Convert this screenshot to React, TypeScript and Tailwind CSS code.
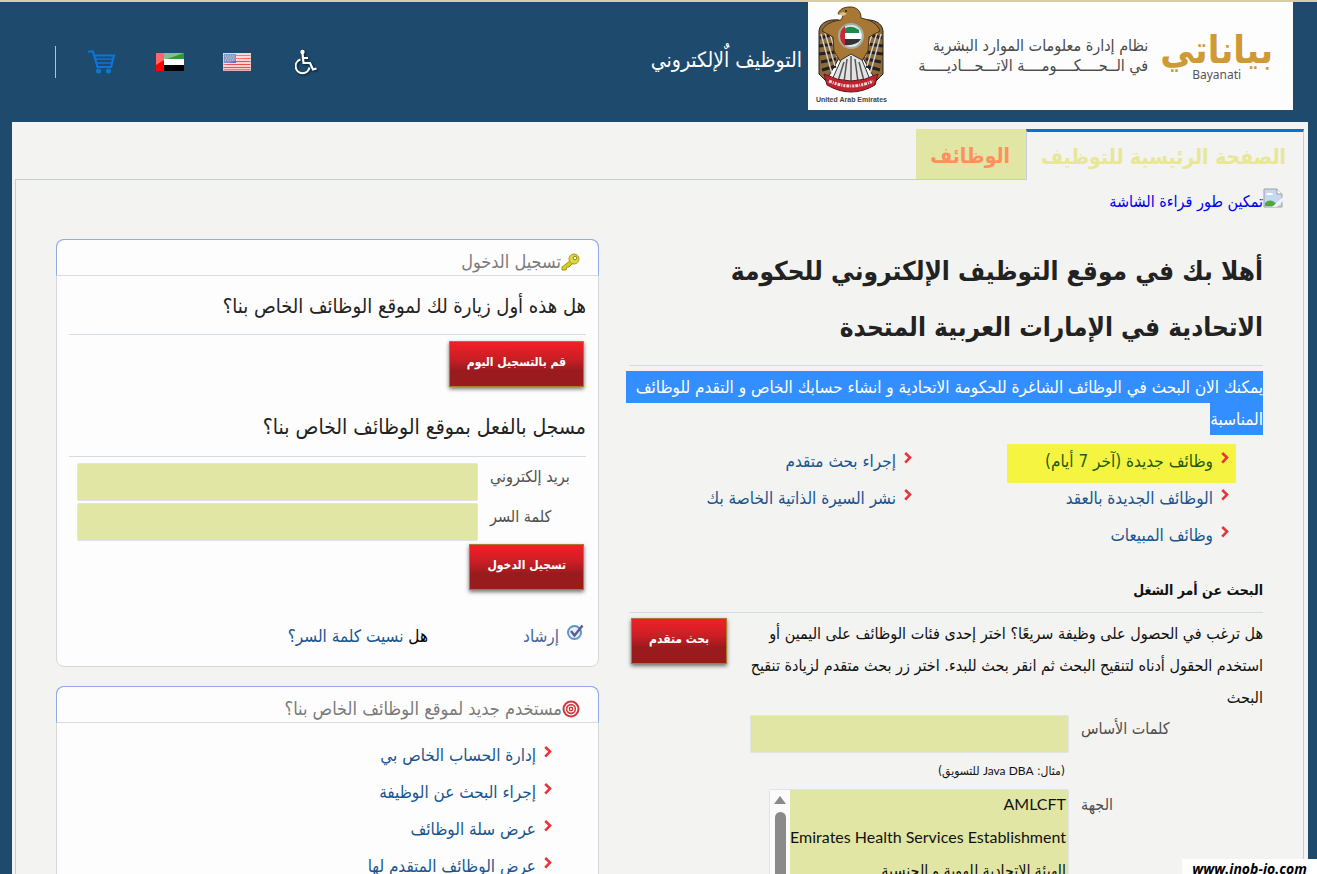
import React, { useState } from "react";

type LinkItem = { label: string; highlighted?: boolean };

const searchLinks: LinkItem[] = [
  { label: "وظائف جديدة (آخر 7 أيام)", highlighted: true },
  { label: "إجراء بحث متقدم" },
  { label: "الوظائف الجديدة بالعقد" },
  { label: "نشر السيرة الذاتية الخاصة بك" },
  { label: "وظائف المبيعات" },
];

const accountLinks: LinkItem[] = [
  { label: "إدارة الحساب الخاص بي" },
  { label: "إجراء البحث عن الوظيفة" },
  { label: "عرض سلة الوظائف" },
  { label: "عرض الوظائف المتقدم لها" },
];

const entities = [
  "AMLCFT",
  "Emirates Health Services Establishment",
  "الهيئة الاتحادية للهوية و الجنسية",
  "وزارة الصحة ووقاية المجتمع",
];

const Chevron = () => (
  <svg width="8" height="12" viewBox="0 0 8 12" className="shrink-0" aria-hidden="true">
    <path d="M1.2 1 L6 5.6 L1.2 10.6" fill="none" stroke="#ea3339" strokeWidth="2.6" />
  </svg>
);

const Emblem = () => (
  <svg width="68" height="88" viewBox="0 0 68 88" aria-hidden="true">
    {/* wings */}
    <path d="M22 14 C12 13 3 16 2 25 L2 68 L9 75 L22 52 Z" fill="#8d6a3c" stroke="#222" strokeWidth="1" />
    <path d="M46 14 C56 13 65 16 66 25 L66 68 L59 75 L46 52 Z" fill="#8d6a3c" stroke="#222" strokeWidth="1" />
    <path d="M3 32 L18 28 M2 40 L17 38 M2 48 L18 46 M4 56 L19 53 M5 64 L19 60 M65 32 L50 28 M66 40 L51 38 M66 48 L50 46 M64 56 L49 53 M63 64 L49 60" stroke="#222" strokeWidth="3" />
    <path d="M4 28 L15 68 M8 27 L18 60 M13 28 L20 51 M64 28 L53 68 M60 27 L50 60 M55 28 L48 51" stroke="#d8d4ce" strokeWidth="1.4" />
    {/* body */}
    <path d="M24 14 C25 12 26 11 26 8 L21 8 C22 4 26 1 33 1 C40 1 44 5 44 12 C53 14 60 17 63 25 L52 31 L51 45 L43 58 L25 58 L17 45 L16 31 L5 25 C8 17 17 15 24 14 Z" fill="#a77835" stroke="#4b3010" strokeWidth="1" />
    <path d="M21 8 L26 6 L30 8 L26 10 Z" fill="#d9c18e" />
    <circle cx="29" cy="5" r="1" fill="#222" />
    <circle cx="34" cy="30" r="12" fill="#e5e5e5" stroke="#9fb0a8" strokeWidth="2" />
    <path d="M27 23 Q34 18 42 24 V27 H27Z" fill="#1b8b4c" />
    <rect x="27" y="27" width="17" height="6" fill="#fff" />
    <path d="M27 33 H44 Q40 40 27 39Z" fill="#333" />
    <path d="M28 20 Q23 24 23 30 Q23 36 28 40Z" fill="#c82a35" />
    {/* tail and ribbon */}
    <path d="M24 54 L34 48 L45 54 L54 76 L34 80 L14 76Z" fill="#e3e3e3" stroke="#333" />
    <path d="M34 50 V77 M30 53 L27 76 M38 53 L41 76 M27 56 L21 75 M42 56 L47 75" stroke="#555" strokeWidth="1.5" />
    <path d="M7 68 Q34 82 61 68 L58 79 Q46 86 34 86 Q22 86 10 79Z" fill="#bd2430" stroke="#691018" />
    <path d="M12 75 Q34 85 56 75" fill="none" stroke="#f0d8d8" strokeWidth="3" strokeDasharray="3 1 1 1 2 1" />
  </svg>
);

const Wheelchair = () => (
  <svg width="24" height="28" viewBox="0 0 24 28" aria-hidden="true" className="drop-shadow-[1px_1px_1px_#071c2c]">
    <circle cx="7.5" cy="4" r="2.2" fill="#fff" />
    <path d="M7.5 5 L8.5 15 H15 L18 21.5 L21.5 20.5 M8.5 10 H13" fill="none" stroke="#fff" strokeWidth="2.2" />
    <path d="M5.5 11.5 A7 7 0 1 0 14.5 19.5" fill="none" stroke="#fff" strokeWidth="2" />
  </svg>
);

const UsFlag = () => (
  <svg width="28" height="18" viewBox="0 0 28 18" aria-hidden="true">
    <rect width="28" height="18" fill="#fff" />
    <path d="M0 2.5 H28 M0 5.5 H28 M0 8.5 H28 M0 11.5 H28 M0 14.5 H28 M0 17 H28" stroke="#ee4d4d" strokeWidth="1.7" />
    <rect x="1" y="1" width="12" height="9" fill="#5e70b0" />
    <path d="M2 3 H12 M3 5 H12 M2 7 H12" stroke="#dfe4f4" strokeDasharray="1 1.4" />
    <path d="M0 0 H28 V5 Q12 6 0 13Z" fill="#fff" opacity=".25" />
    <rect x=".5" y=".5" width="27" height="17" fill="none" stroke="#d9c9cd" opacity=".7" />
  </svg>
);

const UaeFlag = () => (
  <svg width="28" height="18" viewBox="0 0 28 18" aria-hidden="true">
    <rect width="28" height="6" fill="#2e9a35" />
    <rect y="6" width="28" height="6" fill="#fff" />
    <rect y="12" width="28" height="6" fill="#000" />
    <rect width="8" height="18" fill="#f00" />
    <path d="M0 0 H28 L8 7 L0 12Z" fill="#fff" opacity=".4" />
  </svg>
);

const Cart = () => (
  <svg width="28" height="24" viewBox="0 0 28 24" aria-hidden="true">
    <path d="M0 1.5 H5 L9.5 17 H23 L26 5.5 H7" fill="none" stroke="#0b76d6" strokeWidth="2.2" />
    <path d="M7.5 9 H24 M8.5 13 H23" fill="none" stroke="#0b76d6" strokeWidth="1.6" />
    <circle cx="10.5" cy="21" r="2.6" fill="#0b76d6" />
    <circle cx="20.5" cy="21" r="2.6" fill="#0b76d6" />
  </svg>
);

const BrokenImage = () => (
  <svg width="20" height="20" viewBox="0 0 20 20" aria-hidden="true">
    <path d="M1 1 H14 L19 6 V19 H1Z" fill="#c5d9f4" stroke="#a0a0a0" />
    <path d="M3 7 Q4 4 7 5 Q10 5 10 7Z" fill="#fff" />
    <path d="M2 18 V15 Q8 9 15 18Z" fill="#4fa83a" />
    <path d="M14 1 V6 H19" fill="#fff" stroke="#a0a0a0" />
    <path d="M9 19 L20 9 V13 L14 19Z" fill="#f3f3f1" />
  </svg>
);

const Key = () => (
  <svg width="19" height="18" viewBox="0 0 19 18" aria-hidden="true">
    <path d="M9 8 L1 14 L1 17 H5 L6 14 L8 14 L12 10Z" fill="#d8cc28" stroke="#9c9318" />
    <circle cx="13" cy="6" r="5" fill="#e2d73b" stroke="#a49b1e" />
    <circle cx="14" cy="5" r="1.8" fill="#fffde0" stroke="#8f871d" />
  </svg>
);

const Target = () => (
  <svg width="18" height="18" viewBox="0 0 18 18" aria-hidden="true">
    <circle cx="9" cy="9" r="8.5" fill="#cf3a3f" />
    <circle cx="9" cy="9" r="5.8" fill="none" stroke="#fff" strokeWidth="1.3" />
    <circle cx="9" cy="9" r="3" fill="none" stroke="#fff" strokeWidth="1.2" />
    <circle cx="9" cy="9" r="1" fill="#fff" />
  </svg>
);

const HintCheck = () => (
  <svg width="17" height="17" viewBox="0 0 17 17" aria-hidden="true">
    <circle cx="7.5" cy="8.5" r="6.5" fill="#e8f2fb" stroke="#5a97d2" strokeWidth="2" />
    <path d="M4 7 L7.5 11.5 L15.5 1.5" fill="none" stroke="#5c5b92" strokeWidth="2.4" />
  </svg>
);

const RedButton: React.FC<{ children: React.ReactNode; onClick?: () => void }> = ({ children, onClick }) => (
  <button
    type="button"
    onClick={onClick}
    className="h-[46px] shrink-0 whitespace-nowrap border border-[#a97c2c] bg-linear-to-b from-[#ee1f27] from-5% via-[#c81e25] via-40% to-[#991b1e] to-65% px-[17px] pb-1 text-[12px] font-bold text-white shadow-[0_2px_4px_rgba(0,0,0,0.55)]"
  >
    {children}
  </button>
);

const BulletLink: React.FC<{ item: LinkItem }> = ({ item }) => (
  <a href="#" className="flex items-start gap-2 text-[17px] leading-[34px] whitespace-nowrap">
    <span className="pt-2">
      <Chevron />
    </span>
    {item.label}
  </a>
);

const Card: React.FC<{ icon: React.ReactNode; title: string; children: React.ReactNode }> = ({
  icon,
  title,
  children,
}) => (
  <section className="rounded-lg border border-[#d5d7d9] bg-[#fdfdfd]">
    <h2 className="-mx-px -mt-px flex h-[37px] items-center rounded-t-lg border border-[#93a9e8] border-b-[#d9dde0] ps-[18px] pt-2 text-[18px] text-[#7b7b7b]">
      {icon}
      {title}
    </h2>
    {children}
  </section>
);

const App: React.FC = () => {
  const [email, setEmail] = useState("");
  const [password, setPassword] = useState("");
  const [keywords, setKeywords] = useState("");

  return (
    <div
      dir="rtl"
      className="flex h-screen flex-col overflow-hidden border-t-2 border-[#d8cda2] bg-[#1e4a6d] font-['DejaVu_Sans_Condensed','DejaVu_Sans',sans-serif] text-[#111]"
    >
      <header className="flex h-[120px] shrink-0 items-start ps-6 pe-[55px]">
        <div className="flex h-[108px] w-[485px] items-center justify-between bg-[#fdfdfd] ps-5 pe-2">
          <div className="flex items-center gap-3">
            <div className="flex flex-col items-center">
              <span className="text-[38px] leading-[38px] font-bold text-[#cf9a35]">بياناتي</span>
              <span className="font-['Noto_Sans',sans-serif] text-[12px] leading-3 text-[#555]">Bayanati</span>
            </div>
            <p className="text-[16px] leading-5 whitespace-nowrap text-[#4a4a4a]">
              نظام إدارة معلومات الموارد البشرية
              <br />
              في الــحــــكــــومــــة الاتـــحـــاديـــــة
            </p>
          </div>
          <div className="flex flex-col items-center">
            <Emblem />
            <span className="font-['Liberation_Sans',sans-serif] text-[7px] leading-3 font-bold text-[#444]">
              United Arab Emirates
            </span>
          </div>
        </div>
        <h1 className="ms-[6px] pt-[42px] text-[21px] leading-8 whitespace-nowrap text-white">التوظيف اٌلإلكتروني</h1>
        <nav className="ms-auto flex h-[120px] items-center">
          <a href="#" aria-label="إمكانية الوصول" className="me-11">
            <Wheelchair />
          </a>
          <a href="#" aria-label="English" className="me-[39px]">
            <UsFlag />
          </a>
          <a href="#" aria-label="العربية" className="me-10">
            <UaeFlag />
          </a>
          <a href="#" aria-label="سلة الوظائف" className="me-8">
            <Cart />
          </a>
          <span className="h-8 w-px bg-[#a9c6de]" />
        </nav>
      </header>

      <main className="ms-[9px] me-3 flex-1 bg-[#f3f3f1] ps-1 pe-[3px] pt-[7px]">
        <nav className="flex h-[51px] text-[21px] leading-[50px] font-bold whitespace-nowrap">
          <a
            href="#"
            className="border-x border-t-3 border-x-[#c3ced8] border-t-[#0572ce] ps-[17px] pe-[14px] text-[#e8e794]"
          >
            الصفحة الرئيسية للتوظيف
          </a>
          <a href="#" className="border-b border-[#c3ced8] bg-[#e1e6a5] ps-4 pe-[14px] pt-[2px] text-[#ff8f5c]">
            الوظائف
          </a>
          <span className="flex-1 border-b border-[#c3ced8]" />
        </nav>

        <div className="border-x border-[#c3ced8] ps-10 pe-10">
          <a href="#" className="-ms-5 flex h-[59px] items-start pt-2 text-[16px] leading-7 text-[#0000ee]">
            <BrokenImage />
            تمكين طور قراءة الشاشة
          </a>

          <div className="grid grid-cols-[637fr_543fr] items-start gap-[27px]">
            <section>
              <h2 className="me-[3px] border-b border-[#d3dce5] pt-1 pb-[10px] text-[26px] leading-[56px] font-bold whitespace-nowrap text-[#222]">
                أهلا بك في موقع التوظيف الإلكتروني للحكومة
                <br />
                الاتحادية في الإمارات العربية المتحدة
              </h2>
              <p className="mt-[5px] text-[17px] leading-8 whitespace-nowrap text-white">
                <span className="block w-full bg-[#338fff]">
                  يمكنك الان البحث في الوظائف الشاغرة للحكومة الاتحادية و انشاء حسابك الخاص و التقدم للوظائف
                </span>
                <span className="block w-fit bg-[#338fff]">المناسبة</span>
              </p>

              <ul className="mt-[9px] grid auto-rows-[37px] grid-cols-[317px_1fr] ps-[27px] text-[#195590]">
                {searchLinks.map((item) => (
                  <li
                    key={item.label}
                    className={
                      item.highlighted ? "h-[39px] w-[229px] bg-[#f5f541] ps-[7px] text-[#245a12]" : "ps-[7px]"
                    }
                  >
                    <BulletLink item={item} />
                  </li>
                ))}
              </ul>

              <h3 className="me-[3px] mt-[23px] border-b border-[#d3dce5] pb-[10px] text-[14px] leading-6 font-bold">
                البحث عن أمر الشغل
              </h3>
              <div className="mt-[5px] flex items-start justify-between pe-[5px]">
                <p className="text-[16px] leading-8 whitespace-nowrap">
                  هل ترغب في الحصول على وظيفة سريعًا؟ اختر إحدى فئات الوظائف على اليمين أو
                  <br />
                  استخدم الحقول أدناه لتنقيح البحث ثم انقر بحث للبدء. اختر زر بحث متقدم لزيادة تنقيح
                  <br />
                  البحث
                </p>
                <RedButton>بحث متقدم</RedButton>
              </div>

              <div className="flex gap-3 pt-px ps-[91px] text-[16px] text-[#505050]">
                <label htmlFor="keywords" className="w-[91px] text-left leading-7 whitespace-nowrap">
                  كلمات الأساس
                </label>
                <input
                  id="keywords"
                  value={keywords}
                  onChange={(e) => setKeywords(e.target.value)}
                  className="h-[38px] w-[319px] rounded-xs border border-[#dfe4e7] bg-[#e1e6a5] px-1"
                />
              </div>
              <p className="ps-[198px] text-[12px] leading-[35px]">
                (مثال: <span className="font-['Lato',sans-serif]">Java DBA</span> للتسويق)
              </p>
              <div className="flex gap-3 ps-[91px] text-[16px] text-[#505050]">
                <label htmlFor="entity" className="w-[91px] text-left leading-8">
                  الجهة
                </label>
                <div className="flex w-[300px] rounded-xs border border-[#dfe4e7]">
                  <select
                    id="entity"
                    multiple
                    size={4}
                    className="h-[136px] min-w-0 flex-1 overflow-hidden bg-[#e1e6a5] pt-1 font-['Lato','DejaVu_Sans_Condensed','DejaVu_Sans',sans-serif] text-[16px] leading-[33px] text-[#111]"
                  >
                    {entities.map((entity) => (
                      <option key={entity} className="h-[33px] px-[2px] py-0">
                        {entity}
                      </option>
                    ))}
                  </select>
                  <div className="flex w-5 flex-col items-center gap-2 bg-[#fbfbfb] pt-[6px]">
                    <svg width="12" height="8" viewBox="0 0 12 8" aria-hidden="true">
                      <path d="M6 0 L12 8 H0Z" fill="#8a8a8a" />
                    </svg>
                    <span className="w-[11px] flex-1 rounded-t-full bg-[#8a8a8a]" />
                  </div>
                </div>
              </div>
            </section>

            <aside className="flex flex-col gap-[19px]">
              <Card icon={<Key />} title="تسجيل الدخول">
                <div className="px-3">
                  <h3 className="h-[59px] border-b border-[#d3dce5] pt-3 text-[20px] leading-9 whitespace-nowrap text-[#222]">
                    هل هذه أول زيارة لك لموقع الوظائف الخاص بنا؟
                  </h3>
                  <div className="pt-[6px] ps-[2px]">
                    <RedButton>قم بالتسجيل اليوم</RedButton>
                  </div>
                  <h3 className="mt-5 h-[50px] border-b border-[#d3dce5] pt-[2px] text-[21px] leading-9 whitespace-nowrap text-[#222]">
                    مسجل بالفعل بموقع الوظائف الخاص بنا؟
                  </h3>
                  <div className="flex flex-col gap-[2px] pt-[6px] pe-2 text-[16px] text-[#505050]">
                    <div className="flex justify-end gap-3">
                      <label htmlFor="email" className="flex-1 text-left leading-7 whitespace-nowrap">
                        بريد إلكتروني
                      </label>
                      <input
                        id="email"
                        type="email"
                        value={email}
                        onChange={(e) => setEmail(e.target.value)}
                        className="h-[38px] w-[401px] rounded-xs border border-[#dfe4e7] bg-[#e1e6a5] px-1"
                      />
                    </div>
                    <div className="flex justify-end gap-3">
                      <label htmlFor="password" className="flex-1 text-left leading-7 whitespace-nowrap">
                        كلمة السر
                      </label>
                      <input
                        id="password"
                        type="password"
                        value={password}
                        onChange={(e) => setPassword(e.target.value)}
                        className="h-[38px] w-[401px] rounded-xs border border-[#dfe4e7] bg-[#e1e6a5] px-1"
                      />
                    </div>
                  </div>
                  <div className="pt-[3px] ps-[2px]">
                    <RedButton>تسجيل الدخول</RedButton>
                  </div>
                  <div className="flex h-[76px] items-start pt-[30px] text-[17px] leading-8 whitespace-nowrap text-[#195590]">
                    <a href="#" className="flex w-[158px] gap-2 ps-[2px] text-[#4a62a0]">
                      <span className="pt-1">
                        <HintCheck />
                      </span>
                      إرشاد
                    </a>
                    <p>
                      <span className="text-black">هل</span> <a href="#">نسيت كلمة السر؟</a>
                    </p>
                  </div>
                </div>
              </Card>

              <Card icon={<Target />} title="مستخدم جديد لموقع الوظائف الخاص بنا؟">
                <ul className="ps-[46px] pt-[15px] text-[#195590]">
                  {accountLinks.map((item) => (
                    <li key={item.label} className="h-[37px]">
                      <BulletLink item={item} />
                    </li>
                  ))}
                </ul>
              </Card>
            </aside>
          </div>
        </div>
      </main>

      <div
        dir="ltr"
        className="fixed right-0 bottom-0 h-[15px] w-[135px] overflow-hidden bg-white text-center font-['Open_Sans',sans-serif] text-[14px] leading-[19px] font-bold text-black italic"
      >
        www.inob-jo.com
      </div>
    </div>
  );
};

export default App;
